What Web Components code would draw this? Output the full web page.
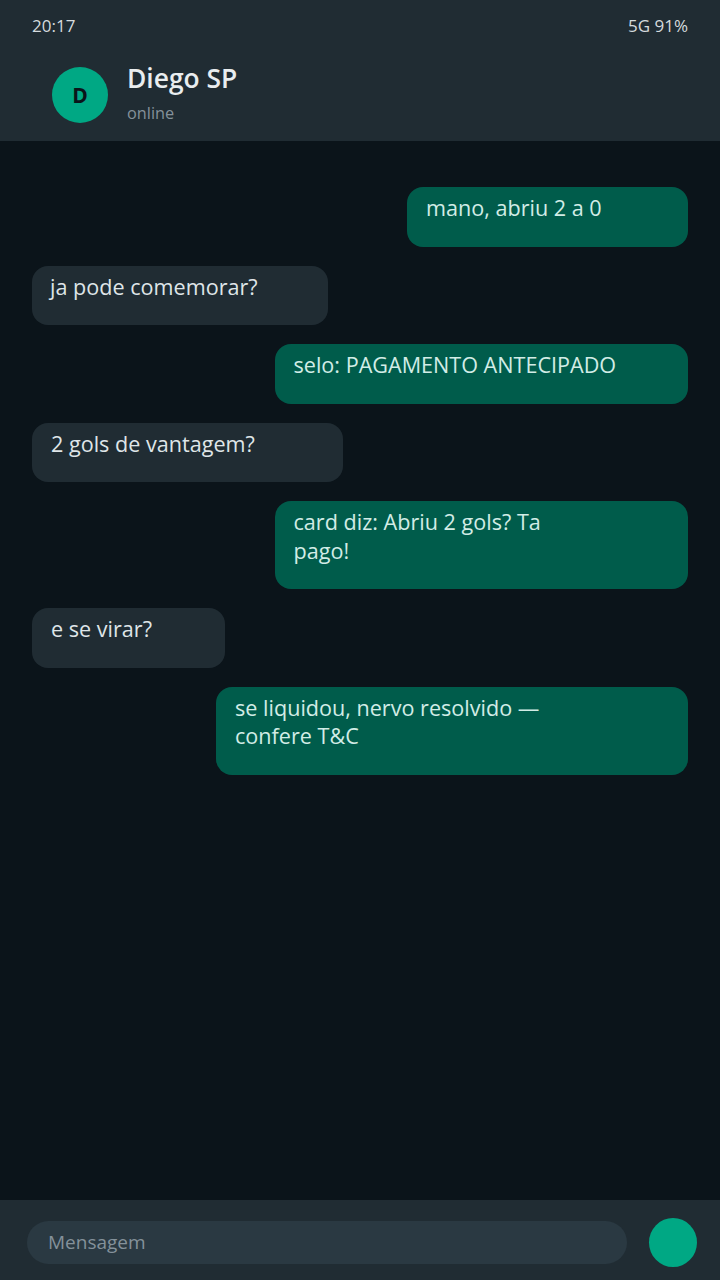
<!doctype html>
<html lang="pt">
<head>
<meta charset="utf-8">
<title>Diego SP</title>
<style>
  html, body { margin: 0; height: 100%; background: #0b141a; }
  body { font-family: "Open Sans", "Noto Sans", sans-serif; }
</style>
</head>
<body>
<chat-screen>
  <chat-header slot="top" name="Diego SP" presence="online" time="20:17" signal="5G 91%"></chat-header>
  <chat-bubble from="me" style="--w:281px">mano, abriu 2 a 0</chat-bubble>
  <chat-bubble style="--w:296px;--pad:18px">ja pode comemorar?</chat-bubble>
  <chat-bubble from="me" style="--w:413px;--pad:18.5px">selo: PAGAMENTO ANTECIPADO</chat-bubble>
  <chat-bubble style="--w:311px">2 gols de vantagem?</chat-bubble>
  <chat-bubble from="me" style="--w:413px;--pad:18.5px">card diz: Abriu 2 gols? Ta<br>pago!</chat-bubble>
  <chat-bubble style="--w:193px">e se virar?</chat-bubble>
  <chat-bubble from="me" style="--w:472px">se liquidou, nervo resolvido —<br>confere T&amp;C</chat-bubble>
  <chat-composer slot="bottom" placeholder="Mensagem"></chat-composer>
</chat-screen>

<script>
class ChatScreen extends HTMLElement {
  connectedCallback() {
    this.attachShadow({ mode: 'open' });
    this.shadowRoot.innerHTML = `
      <style>
        :host { display: flex; flex-direction: column; height: 1280px; background: #0b141a; }
        main { flex: 1; display: flex; flex-direction: column; gap: 18.9px; padding: 46px 32px 0; min-height: 0; }
      </style>
      <slot name="top"></slot>
      <main><slot></slot></main>
      <slot name="bottom"></slot>`;
  }
}

class ChatHeader extends HTMLElement {
  connectedCallback() {
    this.attachShadow({ mode: 'open' });
    const name = this.getAttribute('name') ?? '';
    this.shadowRoot.innerHTML = `
      <style>
        :host { display: block; height: 141px; box-sizing: border-box; background: #202c33; color: #e9edef; }
        .status {
          display: flex; justify-content: space-between; align-items: center;
          height: 50px; padding: 0 32px; font-size: 17px; color: #d5dbde;
        }
        .who { display: flex; align-items: center; gap: 19px; padding: 0 0 0 52px; height: 90px; }
        .avatar {
          width: 56px; height: 56px; border-radius: 50%; background: #00a884; color: #0b141a;
          display: flex; align-items: center; justify-content: center;
          font-size: 21px; font-weight: 700;
        }
        .name { font-size: 26.4px; line-height: 32px; font-weight: 600; margin-top: -5px; }
        .presence { font-size: 16.3px; line-height: 22px; margin-top: 8px; color: #84919a; }
      </style>
      <div class="status"><span>${this.getAttribute('time')}</span><span>${this.getAttribute('signal')}</span></div>
      <div class="who">
        <div class="avatar">${name.charAt(0)}</div>
        <div>
          <div class="name">${name}</div>
          <div class="presence">${this.getAttribute('presence')}</div>
        </div>
      </div>`;
  }
}

class ChatBubble extends HTMLElement {
  connectedCallback() {
    this.attachShadow({ mode: 'open' });
    this.shadowRoot.innerHTML = `
      <style>
        :host {
          display: block; box-sizing: border-box; width: var(--w, auto);
          padding: 7px var(--pad, 19px) 24.5px;
          border-radius: 16px; font-size: 21.6px; line-height: 28.2px;
          background: #202c33; color: #dfe5e8;
        }
        :host([from="me"]) { align-self: flex-end; background: #005c4b; color: #d2ece6; }
      </style>
      <slot></slot>`;
  }
}

class ChatComposer extends HTMLElement {
  connectedCallback() {
    this.attachShadow({ mode: 'open' });
    this.shadowRoot.innerHTML = `
      <style>
        :host {
          display: flex; align-items: center; gap: 22px; box-sizing: border-box;
          height: 80px; padding: 4px 23px 0 27px; background: #202c33;
        }
        .field {
          flex: 1; height: 43px; border-radius: 22px; background: #2a3942; color: #84919a;
          display: flex; align-items: center; padding: 0 21px; font-size: 19px;
        }
        .send { width: 48px; height: 49px; border-radius: 50%; background: #00a884; }
      </style>
      <div class="field">${this.getAttribute('placeholder')}</div>
      <div class="send"></div>`;
  }
}

customElements.define('chat-screen', ChatScreen);
customElements.define('chat-header', ChatHeader);
customElements.define('chat-bubble', ChatBubble);
customElements.define('chat-composer', ChatComposer);
</script>
</body>
</html>
